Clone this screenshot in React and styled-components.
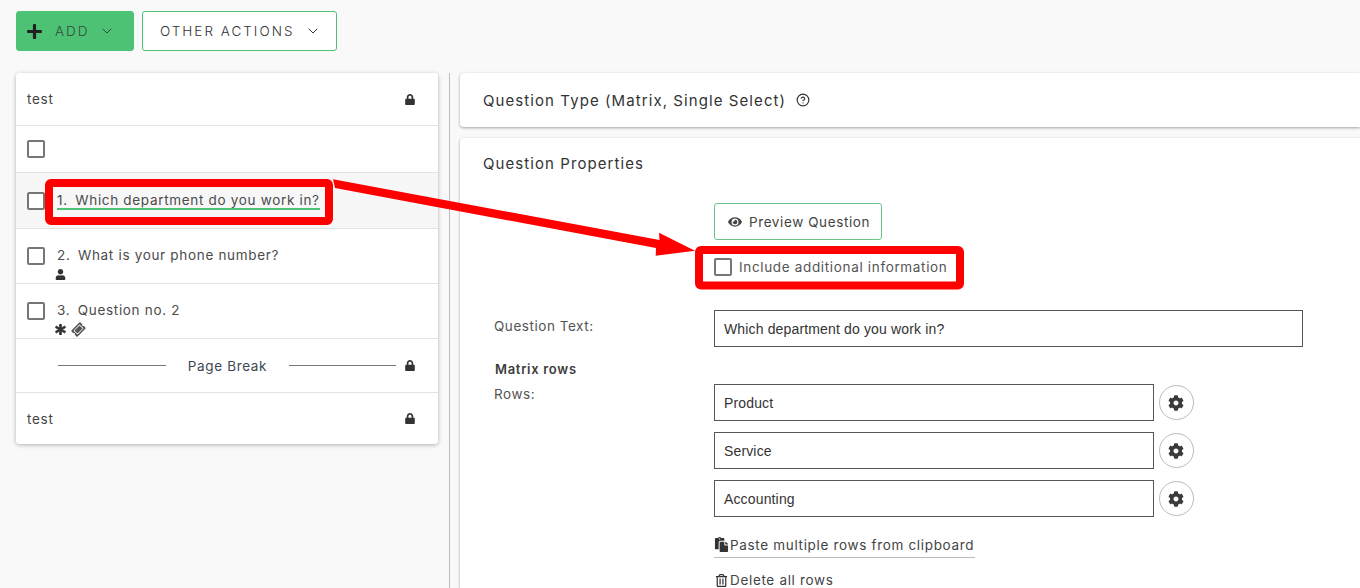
import React from 'react';
import styled, { createGlobalStyle } from 'styled-components';
import { ChevronDown, CircleHelp } from 'lucide-react';
import { FaPlus, FaLock, FaUser, FaAsterisk, FaTicketAlt, FaCog, FaPaste, FaRegTrashAlt, FaEye } from 'react-icons/fa';

const GlobalStyle = createGlobalStyle`
  html, body {
    margin: 0;
    height: 100%;
    overflow: hidden;
    background: #f9f9f9;
  }
  * { box-sizing: border-box; }
  body {
    font-family: Inter, "Noto Sans", sans-serif;
    font-size: 13.5px;
    line-height: 16px;
    color: #444;
  }
`;

const Page = styled.div`
  position: relative;
  width: 1360px;
  height: 588px;
  overflow: hidden;
`;

const Toolbar = styled.div`
  display: flex;
  gap: 8px;
  padding: 11px 16px 0;
  height: 73px;
`;

const ActionButton = styled.div`
  display: flex;
  align-items: center;
  width: ${p => p.$w}px;
  height: 40px;
  padding-left: ${p => p.$primary ? '9px' : '17px'};
  border-radius: 3px;
  border: 1px solid #4dc274;
  background: ${p => p.$primary ? '#4dc274' : '#fff'};
  color: ${p => p.$primary ? '#2f4f3a' : '#333'};
  font-size: 13.5px;
  font-weight: 300;
  letter-spacing: 2px;
  white-space: nowrap;

  svg.plus {
    color: #222;
    margin-right: 12px;
  }
  svg.chev {
    margin-left: ${p => p.$primary ? '9px' : '11px'};
  }
`;

const Columns = styled.div`
  display: flex;
  align-items: stretch;
  height: 515px;
  padding-left: 16px;
`;

const ListCard = styled.div`
  width: 422px;
  height: 371px;
  background: #fff;
  border-radius: 4px;
  box-shadow: 0 1px 4px rgba(0, 0, 0, 0.3);
  overflow: hidden;
`;

const Row = styled.div`
  display: flex;
  height: ${p => p.$h}px;
  padding-left: 11px;
  padding-right: 23px;
  border-bottom: ${p => p.$last ? 'none' : '1px solid #e2e2e2'};
  background: ${p => p.$active ? '#f7f7f7' : '#fff'};
  align-items: ${p => p.$pt ? 'flex-start' : 'center'};
  padding-top: ${p => p.$pt || 0}px;
`;

const RowLabel = styled.span`
  flex: 1;
  letter-spacing: 0.7px;
`;

const Box = styled.span`
  display: block;
  flex: none;
  width: 18px;
  height: 18px;
  background: #fff;
  border: 2px solid #767676;
  border-radius: 2px;
`;

const QuestionText = styled.div`
  margin-left: 12px;
  flex: 1;
`;

const QuestionTitle = styled.div`
  display: inline-block;
  letter-spacing: 0.68px;
  color: #4b4b4b;
  white-space: pre;
  border-bottom: ${p => p.$active ? '2px solid #4dc274' : 'none'};
`;

const QuestionNumber = styled.span`
  margin-right: 3px;
`;

const BadgeRow = styled.div`
  display: flex;
  align-items: center;
  gap: 6px;
  height: 13px;
  margin: 5px 0 0 -2px;
  color: #333;
`;

const AsteriskBadge = styled(FaAsterisk)`
  stroke: currentColor;
  stroke-width: 40;
`;

const BreakRow = styled.div`
  display: flex;
  align-items: center;
  flex: 1;
  padding-left: 31px;
`;

const BreakLine = styled.span`
  width: ${p => p.$w}px;
  height: 1px;
  background: #777;
`;

const BreakText = styled.span`
  flex: none;
  width: 123px;
  text-align: center;
  letter-spacing: 0.65px;
  color: #3c4752;
`;

const LockIcon = styled(FaLock)`
  flex: none;
  width: 10px;
  height: 11px;
  color: #333;
  margin-left: ${p => p.$ml || 0}px;
`;

const Divider = styled.div`
  width: 1px;
  margin-left: 11px;
  margin-right: 10px;
  background: #bbb;
`;

const RightColumn = styled.div`
  width: 920px;
  display: flex;
  flex-direction: column;
  gap: 11px;
`;

const Panel = styled.div`
  flex: none;
  background: #fff;
  border-radius: 4px 0 0 4px;
  box-shadow: 0 1px 3px rgba(0, 0, 0, 0.35);
  padding-left: 23px;
`;

const TypePanel = styled(Panel)`
  height: 54px;
  display: flex;
  align-items: center;
  gap: 10px;
`;

const PanelTitle = styled.div`
  font-size: 15px;
  line-height: 17px;
  letter-spacing: 1.08px;
  color: #333;
`;

const PropsPanel = styled(Panel)`
  flex: 1;
  padding-top: 17px;
`;

const Form = styled.div`
  display: grid;
  grid-template-columns: 231px 1fr;
  padding-top: 31px;
`;

const PreviewButton = styled.div`
  grid-column: 2;
  display: flex;
  align-items: center;
  gap: 7px;
  width: 168px;
  height: 37px;
  padding-left: 13px;
  border: 1px solid #6cc48a;
  border-radius: 3px;
  letter-spacing: 0.6px;
  color: #444;
`;

const IncludeRow = styled.div`
  grid-column: 2;
  display: flex;
  align-items: center;
  gap: 7px;
  height: 18px;
  margin-top: 18px;
  letter-spacing: 0.66px;
  color: #555;
`;

const FieldLabel = styled.div`
  padding-left: 11px;
  letter-spacing: 0.55px;
  color: #555;
`;

const QuestionLabel = styled(FieldLabel)`
  margin-top: 42px;
`;

const QuestionField = styled.div`
  margin-top: 34px;
`;

const TextBox = styled.div`
  display: flex;
  align-items: center;
  width: ${p => p.$w}px;
  height: 37px;
  padding-left: 9px;
  background: #fff;
  border: 1px solid #555;
  font-family: "Liberation Sans", Arial, sans-serif;
  font-size: 14px;
  letter-spacing: 0.15px;
  color: #333;
`;

const MatrixHeading = styled.div`
  grid-column: 1 / 3;
  padding-left: 12px;
  margin-top: 13px;
  font-size: 13px;
  font-weight: 600;
  letter-spacing: 0.7px;
  line-height: 18px;
  color: #3d3d3d;
`;

const RowsLabel = styled(FieldLabel)`
  margin-top: 8px;
`;

const RowsList = styled.div`
  display: flex;
  flex-direction: column;
  gap: 11px;
  margin-top: 6px;
`;

const RowField = styled.div`
  display: flex;
  align-items: center;
  gap: 5px;
`;

const GearButton = styled.div`
  display: flex;
  align-items: center;
  justify-content: center;
  width: 35px;
  height: 35px;
  border: 1px solid #bbb;
  border-radius: 50%;
  color: #3a3a3a;
`;

const LinkRow = styled.div`
  display: flex;
  align-items: ${p => p.$underline ? 'flex-start' : 'center'};
  width: 261px;
  height: ${p => p.$underline ? '24px' : '22px'};
  padding-top: ${p => p.$underline ? '3px' : '0'};
  letter-spacing: 0.67px;
  color: #444;
  border-bottom: ${p => p.$underline ? '1px solid #bbb' : 'none'};
`;

const LinkIcon = styled.span`
  display: flex;
  flex: none;
  justify-content: center;
  width: 16px;
  color: #333;
`;

const LinkList = styled.div`
  display: flex;
  flex-direction: column;
  gap: 11px;
  margin-top: 17px;
`;

const Overlay = styled.svg`
  position: absolute;
  left: 0;
  top: 0;
  pointer-events: none;
`;

const HelpIcon = styled(CircleHelp)`
  color: #333;
`;

const TicketBadge = styled(FaTicketAlt)`
  transform: rotate(-45deg);
  color: #555;
`;

const questions = [
  { id: 1, num: '1.', text: 'Which department do you work in?', h: 56, pt: 19, active: true },
  { id: 2, num: '2.', text: 'What is your phone number?', h: 55, pt: 18, badges: [<FaUser key="u" size={11} />] },
  { id: 3, num: '3.', text: 'Question no. 2', h: 55, pt: 18, badges: [<AsteriskBadge key="a" size={11} />, <TicketBadge key="t" size={13} />] },
];

const rowValues = ['Product', 'Service', 'Accounting'];

export default function App() {
  return (
    <Page>
      <GlobalStyle />
      <Toolbar>
        <ActionButton $primary $w={118}>
          <FaPlus className="plus" size={17} />
          ADD
          <ChevronDown className="chev" size={16} strokeWidth={1.5} />
        </ActionButton>
        <ActionButton $w={195}>
          OTHER ACTIONS
          <ChevronDown className="chev" size={16} strokeWidth={1.5} />
        </ActionButton>
      </Toolbar>
      <Columns>
        <div>
          <ListCard>
            <Row $h={53}>
              <RowLabel>test</RowLabel>
              <LockIcon />
            </Row>
            <Row $h={47}>
              <Box />
            </Row>
            {questions.map(q => (
              <Row key={q.id} $h={q.h} $pt={q.pt} $active={q.active}>
                <Box />
                <QuestionText>
                  <QuestionTitle $active={q.active}><QuestionNumber>{q.num}</QuestionNumber> {q.text}</QuestionTitle>
                  {q.badges && <BadgeRow>{q.badges}</BadgeRow>}
                </QuestionText>
              </Row>
            ))}
            <Row $h={54}>
              <BreakRow>
                <BreakLine $w={108} />
                <BreakText>Page Break</BreakText>
                <BreakLine $w={107} />
                <LockIcon $ml={9} />
              </BreakRow>
            </Row>
            <Row $h={51} $last>
              <RowLabel>test</RowLabel>
              <LockIcon />
            </Row>
          </ListCard>
        </div>
        <Divider />
        <RightColumn>
          <TypePanel>
            <PanelTitle>Question Type (Matrix, Single Select)</PanelTitle>
            <HelpIcon size={14} strokeWidth={2} />
          </TypePanel>
          <PropsPanel>
            <PanelTitle>Question Properties</PanelTitle>
            <Form>
              <PreviewButton>
                <FaEye size={14} />
                Preview Question
              </PreviewButton>
              <IncludeRow>
                <Box />
                Include additional information
              </IncludeRow>
              <QuestionLabel>Question Text:</QuestionLabel>
              <QuestionField>
                <TextBox $w={589}>Which department do you work in?</TextBox>
              </QuestionField>
              <MatrixHeading>Matrix rows</MatrixHeading>
              <RowsLabel>Rows:</RowsLabel>
              <div>
                <RowsList>
                  {rowValues.map(v => (
                    <RowField key={v}>
                      <TextBox $w={440}>{v}</TextBox>
                      <GearButton><FaCog size={16} /></GearButton>
                    </RowField>
                  ))}
                </RowsList>
                <LinkList>
                  <LinkRow $underline>
                    <LinkIcon><FaPaste size={15} /></LinkIcon>Paste multiple rows from clipboard
                  </LinkRow>
                  <LinkRow>
                    <LinkIcon><FaRegTrashAlt size={13} /></LinkIcon>Delete all rows
                  </LinkRow>
                </LinkList>
              </div>
            </Form>
          </PropsPanel>
        </RightColumn>
      </Columns>
      <Overlay width="1360" height="588" viewBox="0 0 1360 588">
        <rect x="49" y="183" width="280" height="38" rx="2" fill="none" stroke="#ff0000" strokeWidth="8" />
        <rect x="699" y="250" width="261" height="35.5" rx="2" fill="none" stroke="#ff0000" strokeWidth="8" />
        <polygon points="333,179.3 659.5,240 659,232.7 695,250.7 655.7,255.7 656,248 335,188" fill="#ff0000" />
      </Overlay>
    </Page>
  );
}
